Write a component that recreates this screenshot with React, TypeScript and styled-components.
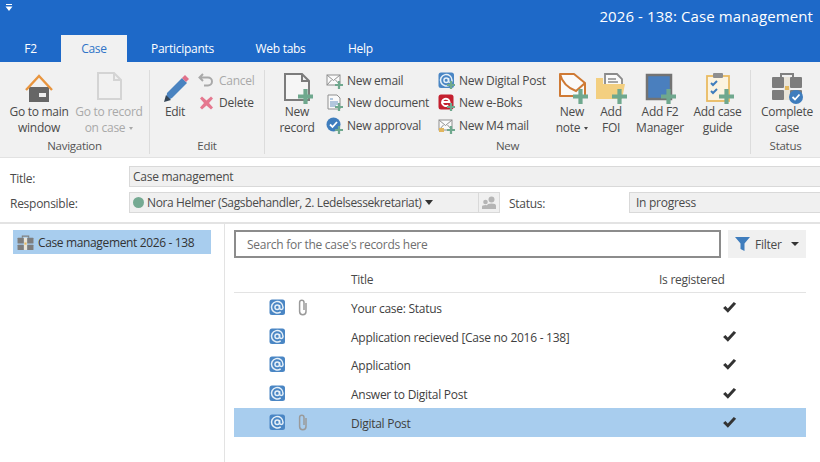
import React from "react";
import styled, { createGlobalStyle } from "styled-components";

const Global = createGlobalStyle`
  html, body { margin: 0; padding: 0; background: #fff; }
  body { width: 820px; height: 462px; overflow: hidden; font-family: "Open Sans", "Noto Sans", sans-serif; font-size: 12px; color: #444; letter-spacing: -0.27px; }
`;

const Page = styled.div`width: 820px; height: 462px; display: flex; flex-direction: column; overflow: hidden;`;
const Header = styled.header`background: #1e69c8; height: 62px; display: flex; flex-direction: column; flex: none;`;
const TitleRow = styled.div`height: 35px; display: flex; justify-content: space-between; padding: 3px 7px 0 5px; box-sizing: border-box; flex: none;`;
const QuickMenu = styled.svg`width: 8px; height: 8px; margin-top: 1px;`;
const WindowTitle = styled.div`color: #fff; font-size: 15px; line-height: 27px; letter-spacing: 0.1px;`;
const Tabs = styled.nav`display: flex; height: 27px;`;
const Tab = styled.div<{ $w: number; $active?: boolean }>`
  width: ${p => p.$w}px; display: flex; align-items: center; justify-content: center; box-sizing: border-box;
  color: ${p => (p.$active ? "#2f74c8" : "#fff")}; background: ${p => (p.$active ? "#f1f1f1" : "transparent")};
`;
const Ribbon = styled.section`height: 96px; background: #f1f1f1; display: flex; border-bottom: 1px solid #e2e2e2; box-sizing: border-box; flex: none;`;
const Group = styled.div<{ $w: number; $last?: boolean }>`
  width: ${p => p.$w}px; flex: none; display: flex; flex-direction: column; box-sizing: border-box;
  border-right: ${p => (p.$last ? "none" : "1px solid #dcdcdc")}; margin: 8px 0 3px;
`;
const GroupBody = styled.div<{ $pl: number }>`flex: 1; display: flex; padding-left: ${p => p.$pl}px; margin-top: -6px;`;
const GroupLabel = styled.div`height: 16px; line-height: 15px; text-align: center; font-size: 11.5px; color: #555;`;
const Large = styled.div<{ $w: number; $off?: boolean }>`
  width: ${p => p.$w}px; flex: none; display: flex; flex-direction: column; align-items: center; padding-top: 8px; color: ${p => (p.$off ? "#a9a9a9" : "#4a4a4a")};
`;
const LargeLabel = styled.div`line-height: 15.5px; text-align: center; white-space: nowrap;`;
const LargeIcon = styled.svg`width: 32px; height: 32px; flex: none;`;
const Caret = styled.span`display: inline-block; width: 0; height: 0; border: 2.5px solid transparent; border-top: 3px solid currentColor; border-bottom: none; margin-left: 4px; vertical-align: 2px;`;
const SmallCol = styled.div<{ $w: number; $ml?: number }>`width: ${p => p.$w}px; margin-left: ${p => p.$ml || 0}px; flex: none; display: flex; flex-direction: column; padding-top: 5px;`;
const Small = styled.div<{ $off?: boolean }>`height: 22.5px; display: flex; align-items: center; gap: 4px; white-space: nowrap; color: ${p => (p.$off ? "#a9a9a9" : "#4a4a4a")};`;
const SmallIcon = styled.svg`width: 17px; height: 17px; flex: none;`;

const Form = styled.section`height: 66px; flex: none; border-bottom: 2px solid #e3e3e3; box-sizing: border-box; padding: 8px 0 0 10px; display: grid; grid-template-columns: 119px 371px 1fr; grid-template-rows: 21px 21px; row-gap: 5px;`;
const FieldLabel = styled.div<{ $pt: number }>`display: flex; align-items: center; padding-top: ${p => p.$pt}px; color: #4a4a4a;`;
const Input = styled.div<{ $span?: boolean }>`
  background: #f0f0f0; border: 1px solid #d9d9d9; box-sizing: border-box; display: flex; align-items: center; padding: 0 3px; color: #4a4a4a; border-right: none;
  ${p => (p.$span ? "grid-column: 2 / 4;" : "")}
`;
const PersonInput = styled(Input)`border-right: 1px solid #d9d9d9; gap: 3px; padding-right: 0;`;
const Dot = styled.span`width: 11px; height: 11px; border-radius: 50%; background: #75aa93; flex: none;`;
const PersonName = styled.span`letter-spacing: -0.37px; white-space: nowrap;`;
const Arrow = styled.span`width: 0; height: 0; border: 4.5px solid transparent; border-top: 5px solid #333; border-bottom: none; margin-left: 1px;`;
const PersonBtn = styled.div`margin-left: auto; width: 20px; height: 100%; border-left: 1px solid #d9d9d9; display: flex; align-items: center; justify-content: center;`;
const StatusCell = styled.div`display: grid; grid-template-columns: 120px 1fr; padding-left: 9px;`;
const StatusInput = styled(Input)`padding-left: 6px;`;

const Body = styled.main`flex: 1; display: flex; min-height: 0;`;
const Side = styled.aside`width: 225px; flex: none; border-right: 1px solid #e3e3e3; box-sizing: border-box; padding: 6px 13px;`;
const TreeItem = styled.div`height: 24px; background: #a8cdee; display: flex; align-items: center; gap: 4px; padding-left: 4px; color: #333; width: 198px; box-sizing: border-box; letter-spacing: -0.36px;`;
const Content = styled.div`flex: 1; padding: 6px 14px 0 9px; display: flex; flex-direction: column;`;
const SearchRow = styled.div`display: flex; gap: 7px; height: 28px; flex: none;`;
const Search = styled.div`flex: 1; border: 2px solid #8c8c8c; box-sizing: border-box; display: flex; align-items: center; padding-left: 11px; color: #6f6f6f;`;
const FilterBtn = styled.div`width: 78px; background: #f0f0f0; display: flex; align-items: center; padding-left: 7px; box-sizing: border-box; gap: 5px; color: #4a4a4a;`;
const FilterCaret = styled.span`width: 0; height: 0; border: 4px solid transparent; border-top: 4.5px solid #333; border-bottom: none; margin-left: 4px;`;
const Table = styled.div`display: flex; flex-direction: column; margin-top: 7px;`;
const Cols = styled.div`display: grid; grid-template-columns: 35px 29px 53px 308px 1fr; align-items: center;`;
const HeadRow = styled(Cols)`height: 28px; border-bottom: 1px solid #e3e3e3; box-sizing: border-box; color: #4a4a4a;`;
const Row = styled(Cols)<{ $sel?: boolean }>`height: 28.8px; background: ${p => (p.$sel ? "#a8cdee" : "transparent")}; color: #3f3f3f;`;
const TitleHead = styled.div`grid-column: 4; white-space: nowrap; padding-top: 2px;`;
const RegHead = styled.div`grid-column: 5; white-space: nowrap; padding-top: 2px;`;
const RegCell = styled.div`display: flex; padding-left: 63px;`;
const IconCell = styled.div<{ $col: number }>`grid-column: ${p => p.$col}; display: flex;`;
const RowTitle = styled.div`grid-column: 4; white-space: nowrap; padding-top: 2px;`;

const Plus = ({ x, y, s = 12 }: { x: number; y: number; s?: number }) => (
  <path d={`M${x + s * 0.36} ${y}h${s * 0.28}v${s * 0.36}h${s * 0.36}v${s * 0.28}h-${s * 0.36}v${s * 0.36}h-${s * 0.28}v-${s * 0.36}h-${s * 0.36}v-${s * 0.28}h${s * 0.36}z`} fill="#6fa88e" />
);

const AtIcon = ({ plus }: { plus?: boolean }) => (
  <SmallIcon viewBox="0 0 17 17">
    <rect x="0.5" y="0.5" width="15.5" height="15.5" rx="2.5" fill="#4a86c4" />
    <g transform="translate(1.35 1.35) scale(0.575)" fill="none" stroke="#e6f0f8" strokeWidth="2.6">
      <circle cx="12" cy="12" r="4" />
      <path d="M16 8v5a3 3 0 0 0 6 0v-1a10 10 0 1 0-4 8" />
    </g>
    {plus && <Plus x={9} y={9} s={8} />}
  </SmallIcon>
);

const Clip = () => (
  <svg width="10" height="17" viewBox="0 0 10 17" fill="none" stroke="#9a9a9a" strokeWidth="1.5">
    <path d="M8 4v8.500a3.200 3.200 0 0 1-6.400 0V3.500a2.200 2.200 0 0 1 4.400 0V11" />
  </svg>
);

const Check = () => (
  <svg width="15" height="13" viewBox="0 0 14 12"><path d="M1 6.500l2.200-2 2.200 2.400L11 .8l2.200 1.800L5.500 11z" fill="#333" /></svg>
);

const MailIcon = ({ lock }: { lock?: boolean }) => (
  <SmallIcon viewBox="0 0 17 17">
    <rect x="1" y="3" width="13" height="10" fill="#fafafa" stroke="#8f8f8f" />
    <path d="M1 3l6.500 5.500L14 3M1 13l4.500-5M14 13l-4.500-5" fill="none" stroke="#8f8f8f" />
    {lock && <rect x="1" y="11" width="5" height="4" fill="#e2b65e" />}
    <Plus x={9} y={9} s={8} />
  </SmallIcon>
);

const CaseIcon = ({ small }: { small?: boolean }) => (
  <svg width={small ? 17 : 32} height={small ? 15 : 32} viewBox={small ? "0 0 32 28" : "0 0 32 32"} style={{ flex: "none" }}>
    <path d="M10 5V2h12v3" fill="none" stroke="#808080" strokeWidth="2" />
    <rect x="1" y="5" width="12" height="11" rx="1" fill="#7d7d7d" />
    <rect x="19" y="5" width="12" height="11" rx="1" fill="#7d7d7d" />
    <rect x="1" y="18" width="12" height="10" rx="1" fill="#7d7d7d" />
    <rect x="19" y="18" width="12" height="10" rx="1" fill="#7d7d7d" />
    <rect x="13" y="5" width="6" height="23" fill="#e9e4d8" />
    <rect x="14" y="14" width="4" height="4" fill="#e3b860" />
    {!small && <><circle cx="25" cy="25" r="7" fill="#3f7dbd" /><path d="M21.500 25l2.500 2.500 4.500-5" fill="none" stroke="#fff" strokeWidth="1.800" /></>}
  </svg>
);

const rows = [
  { t: "Your case: Status", clip: true },
  { t: "Application recieved [Case no 2016 - 138]" },
  { t: "Application" },
  { t: "Answer to Digital Post" },
  { t: "Digital Post", clip: true, sel: true },
];

export default function App() {
  return (
    <Page>
      <Global />
      <Header>
        <TitleRow>
          <QuickMenu viewBox="0 0 8 8"><path d="M1 0h6v1H1zM0.500 2.500h7L4 7z" fill="#fff" /></QuickMenu>
          <WindowTitle>2026 - 138: Case management</WindowTitle>
        </TitleRow>
        <Tabs>
          <Tab $w={61}>F2</Tab>
          <Tab $w={66} $active>Case</Tab>
          <Tab $w={111}>Participants</Tab>
          <Tab $w={85}>Web tabs</Tab>
          <Tab $w={75}>Help</Tab>
        </Tabs>
      </Header>
      <Ribbon>
        <Group $w={150}>
          <GroupBody $pl={4}>
            <Large $w={70}>
              <LargeIcon viewBox="0 0 32 32">
                <path d="M6 15h20v15H6z" fill="#666" />
                <rect x="16" y="21" width="7" height="4" fill="#eee" />
                <path d="M3 18L16 4l13 14" fill="none" stroke="#e8953f" strokeWidth="2.400" />
              </LargeIcon>
              <LargeLabel>Go to main<br />window</LargeLabel>
            </Large>
            <Large $w={70} $off>
              <LargeIcon viewBox="0 0 32 32">
                <path d="M5 1h16l7 7v19H5zM21 1v7h7" fill="none" stroke="#d4d4d4" strokeWidth="2" />
              </LargeIcon>
              <LargeLabel>Go to record<br />on case<Caret /></LargeLabel>
            </Large>
          </GroupBody>
          <GroupLabel>Navigation</GroupLabel>
        </Group>
        <Group $w={115}>
          <GroupBody $pl={5}>
            <Large $w={40}>
              <LargeIcon viewBox="0 0 32 32">
                <path d="M8 21L23 6l5 5L13 26l-6 3z" fill="#4a83c0" />
                <path d="M23 6l3-3 4 4-3 3z" fill="#e0708a" />
                <path d="M5 30l2-7 5 5z" fill="#345" />
              </LargeIcon>
              <LargeLabel>Edit</LargeLabel>
            </Large>
            <SmallCol $w={66} $ml={3}>
              <Small $off>
                <SmallIcon viewBox="0 0 17 17"><path d="M5 2L1.500 5.500 5 9M2 5.500h8a4 4 0 0 1 0 8H6" fill="none" stroke="#a9a9a9" strokeWidth="2" /></SmallIcon>
                Cancel
              </Small>
              <Small>
                <SmallIcon viewBox="0 0 17 17"><path d="M4 2.500l4.500 4 4.500-4 2 2-4 4.500 4 4.500-2 2-4.500-4-4.500 4-2-2 4-4.500-4-4.500z" fill="#e5788f" /></SmallIcon>
                Delete
              </Small>
            </SmallCol>
          </GroupBody>
          <GroupLabel>Edit</GroupLabel>
        </Group>
        <Group $w={486}>
          <GroupBody $pl={7}>
            <Large $w={50}>
              <LargeIcon viewBox="0 0 32 32">
                <path d="M4 2h17l7 7v19H4zM21 2v7h7" fill="#f6f6f6" stroke="#7c7c7c" strokeWidth="2" />
                <Plus x={17} y={17} s={15} />
              </LargeIcon>
              <LargeLabel>New<br />record</LargeLabel>
            </Large>
            <SmallCol $w={112} $ml={4}>
              <Small><MailIcon />New email</Small>
              <Small>
                <SmallIcon viewBox="0 0 17 17">
                  <path d="M2 1h9l3 3v11H2z" fill="#fafafa" stroke="#8f8f8f" />
                  <path d="M4 5h3M4 8h8M4 10h8M4 12h6" stroke="#6a93c0" />
                  <Plus x={9} y={9} s={8} />
                </SmallIcon>
                New document
              </Small>
              <Small>
                <SmallIcon viewBox="0 0 17 17">
                  <circle cx="7.500" cy="7.500" r="7" fill="#3f7dbd" />
                  <path d="M4 7.500l2.500 2.500 4.500-5" fill="none" stroke="#fff" strokeWidth="1.800" />
                  <Plus x={9} y={9} s={8} />
                </SmallIcon>
                New approval
              </Small>
            </SmallCol>
            <SmallCol $w={115}>
              <Small><AtIcon plus />New Digital Post</Small>
              <Small>
                <SmallIcon viewBox="0 0 17 17">
                  <rect x="0.500" y="0.500" width="15" height="15" rx="2.500" fill="#c4202f" />
                  <path d="M4 8h7.500a3.700 3.700 0 1 0-1.300 3.200" fill="none" stroke="#fff" strokeWidth="2" />
                  <Plus x={9} y={9} s={8} />
                </SmallIcon>
                New e-Boks
              </Small>
              <Small><MailIcon lock />New M4 mail</Small>
            </SmallCol>
            <Large $w={38}>
              <LargeIcon viewBox="0 0 32 32">
                <path d="M4 2h14l11 9v13H4z" fill="#fafafa" stroke="#cf7a35" strokeWidth="2" strokeLinejoin="round" />
                <path d="M4 2q3 12 16 17l9-8" fill="none" stroke="#cf7a35" strokeWidth="2" />
                <Plus x={17} y={17} s={15} />
              </LargeIcon>
              <LargeLabel>New<br />note<Caret /></LargeLabel>
            </Large>
            <Large $w={40}>
              <LargeIcon viewBox="0 0 32 32">
                <path d="M10 2h12l5 5v10H10z" fill="#fafafa" stroke="#8a8a8a" strokeWidth="1.800" />
                <path d="M13 7h8M13 10h10" stroke="#8a8a8a" strokeWidth="1.500" />
                <path d="M1 6h7v6h22l-3 15H1z" fill="#f3cf80" />
                <Plus x={17} y={17} s={15} />
              </LargeIcon>
              <LargeLabel>Add<br />FOI</LargeLabel>
            </Large>
            <Large $w={58}>
              <LargeIcon viewBox="0 0 32 32">
                <path d="M3 3h24v24H3z" fill="#4a7fbe" stroke="#737373" strokeWidth="2.500" />
                <Plus x={17} y={17} s={15} />
              </LargeIcon>
              <LargeLabel>Add F2<br />Manager</LargeLabel>
            </Large>
            <Large $w={57}>
              <LargeIcon viewBox="0 0 32 32">
                <rect x="5" y="4" width="22" height="25" fill="#fbf3e0" stroke="#e9bb62" strokeWidth="1.800" />
                <rect x="11" y="1" width="10" height="5" rx="1" fill="#8f8f8f" />
                <path d="M9 11l2 2 4-4M9 19l2 2 4-4" fill="none" stroke="#3f7dbd" strokeWidth="2" />
                <Plus x={17} y={17} s={15} />
              </LargeIcon>
              <LargeLabel>Add case<br />guide</LargeLabel>
            </Large>
          </GroupBody>
          <GroupLabel>New</GroupLabel>
        </Group>
        <Group $w={69} $last>
          <GroupBody $pl={4}>
            <Large $w={64}>
              <CaseIcon />
              <LargeLabel>Complete<br />case</LargeLabel>
            </Large>
          </GroupBody>
          <GroupLabel>Status</GroupLabel>
        </Group>
      </Ribbon>
      <Form>
        <FieldLabel $pt={4}>Title:</FieldLabel>
        <Input $span>Case management</Input>
        <FieldLabel $pt={2}>Responsible:</FieldLabel>
        <PersonInput>
          <Dot /><PersonName>Nora Helmer (Sagsbehandler, 2. Ledelsessekretariat)</PersonName><Arrow />
          <PersonBtn>
            <svg width="16" height="14" viewBox="0 0 16 14" fill="#b5b5b5">
              <circle cx="10.500" cy="3.500" r="3" /><path d="M6 13V9.500Q6 7.500 10.500 7.500T15 9.500V13z" />
              <circle cx="4.500" cy="6" r="2.300" /><path d="M1 13V10.500Q1 9 4.500 9T8 10.500V13z" />
            </svg>
          </PersonBtn>
        </PersonInput>
        <StatusCell>
          <FieldLabel $pt={2}>Status:</FieldLabel>
          <StatusInput>In progress</StatusInput>
        </StatusCell>
      </Form>
      <Body>
        <Side>
          <TreeItem><CaseIcon small />Case management 2026 - 138</TreeItem>
        </Side>
        <Content>
          <SearchRow>
            <Search>Search for the case's records here</Search>
            <FilterBtn>
              <svg width="15" height="14" viewBox="0 0 15 14"><path d="M0 0h15L9.500 6.500V14l-4-2V6.500z" fill="#3f7dbd" /></svg>
              Filter<FilterCaret />
            </FilterBtn>
          </SearchRow>
          <Table>
            <HeadRow><TitleHead>Title</TitleHead><RegHead>Is registered</RegHead></HeadRow>
            {rows.map(r => (
              <Row key={r.t} $sel={r.sel}>
                <IconCell $col={2}><AtIcon /></IconCell>
                <IconCell $col={3}>{r.clip && <Clip />}</IconCell>
                <RowTitle>{r.t}</RowTitle>
                <RegCell><Check /></RegCell>
              </Row>
            ))}
          </Table>
        </Content>
      </Body>
    </Page>
  );
}
